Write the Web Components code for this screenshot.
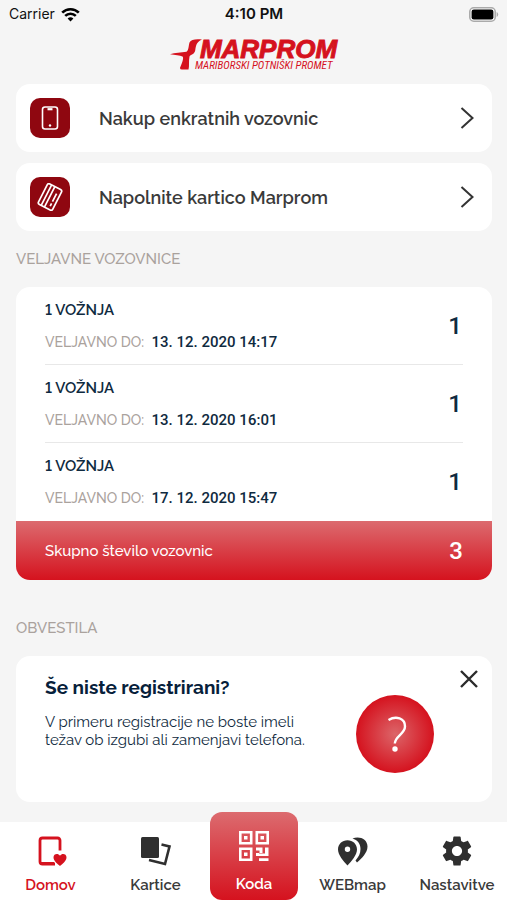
<!DOCTYPE html>
<html lang="sl">
<head>
<meta charset="utf-8">
<meta name="viewport" content="width=device-width, initial-scale=1">
<title>Marprom</title>
<style>
  body {
    margin: 0;
    background-color: #f5f5f5;
    color: #3a3a3a;
    font-family: Raleway, Lato, sans-serif;
    font-variant-numeric: lining-nums;
  }
</style>
</head>
<body>

<template id="status-bar">
  <style>
    :host {
      display: grid;
      grid-template-columns: 1fr auto 1fr;
      align-items: center;
      height: 28px;
      padding: 0 8px 0 9px;
      color: #111;
      font: 400 14px/20px Inter, sans-serif;
    }
    .left {
      display: flex;
      align-items: center;
      gap: 6px;
    }
    .time {
      font-size: 15px;
      font-weight: 600;
    }
    .battery { justify-self: end; }
    svg { display: block; }
  </style>
  <span class="left">
    <slot name="carrier"></slot>
    <svg width="19" height="15" viewBox="0 0 19 15" fill="none" stroke="#000" stroke-width="2.6">
      <path d="M1.2 5.6a11.8 11.8 0 0 1 16.6 0M4.2 8.9a7.6 7.6 0 0 1 10.6 0"/>
      <path d="M9.5 14.6 6.6 11.6a4.2 4.2 0 0 1 5.8 0z" fill="#000" stroke="none"/>
    </svg>
  </span>
  <span class="time"><slot name="time"></slot></span>
  <svg class="battery" width="30" height="15" viewBox="0 0 30 15">
    <rect x=".8" y=".8" width="25.4" height="13.4" rx="4" fill="#fff" stroke="#aaa" stroke-width="1.6"/>
    <rect x="2.6" y="2.6" width="21.8" height="9.8" rx="2.2" fill="#000"/>
    <path d="M27.6 5v5q1.6-.8 1.6-2.5T27.6 5z" fill="#aaa"/>
  </svg>
</template>

<template id="brand-logo">
  <style>
    :host {
      display: flex;
      justify-content: center;
      height: 56px;
      padding-top: 8px;
      box-sizing: border-box;
      color: #d5121e;
    }
    svg { margin-top: 2px; }
    .words {
      display: flex;
      flex-direction: column;
      margin-left: -8px;
    }
    strong, span {
      font-style: italic;
      white-space: nowrap;
    }
    strong {
      padding-left: 5px;
      font-family: "Liberation Sans", sans-serif;
      font-size: 26px;
      line-height: 26px;
      -webkit-text-stroke: 1px #d5121e;
    }
    span {
      font-family: "Roboto Condensed", "Liberation Sans Narrow", sans-serif;
      font-size: 11px;
      line-height: 8px;
    }
  </style>
  <svg width="33" height="32" viewBox="0 0 33 32" fill="#d5121e">
    <path d="M32 1.5C26 1 21 1.2 19.5 4.5C18.5 7.5 19 12 16.500 13.800C11 14.600 5 14.800 0 16.200C5 17.200 10 17.200 12.500 18.500C14.500 20 11 27 10 30Q10 31.500 12 31.500H18.500C19.500 28 18.500 23 19.500 18.500C20.500 16.500 24.500 16.500 25.200 12.500C26 8 26 4 32 1.500Z"/>
  </svg>
  <div class="words"><strong>MARPROM</strong><span>MARIBORSKI POTNIŠKI PROMET</span></div>
</template>

<template id="action-link">
  <style>
    :host { display: block; }
    a {
      display: flex;
      align-items: center;
      height: 68px;
      padding: 0 18px 0 14px;
      border-radius: 14px;
      box-sizing: border-box;
      background-color: #fff;
      color: #3a3a3a;
      font-size: 18px;
      font-weight: 600;
      text-decoration: none;
    }
    .icon {
      display: grid;
      place-items: center;
      width: 40px;
      height: 40px;
      margin-right: 29px;
      border-radius: 10px;
      background-color: #8f0710;
    }
    .label { flex: 1; }
  </style>
  <a href="#">
    <span class="icon"><slot name="icon"></slot></span>
    <span class="label"><slot></slot></span>
    <svg width="14" height="22" viewBox="0 0 14 22" fill="none" stroke="#333" stroke-width="2"><path d="M1.5 1 12.5 11 1.5 21"/></svg>
  </a>
</template>

<template id="section-title">
  <style>
    :host { display: block; }
    h2 {
      margin: 0;
      color: #aaa29d;
      font-size: 15px;
      font-weight: 500;
      line-height: 20px;
    }
  </style>
  <h2><slot></slot></h2>
</template>

<template id="ticket-list">
  <style>
    :host {
      display: block;
      overflow: hidden;
      border-radius: 14px;
      background-color: #fff;
    }
    .rows { padding: 0 29px; }
    .total {
      display: flex;
      align-items: center;
      justify-content: space-between;
      height: 59px;
      padding: 0 29px;
      background: linear-gradient(#dc6b6f, #d5121e);
      color: #fff;
      font-size: 15px;
      font-weight: 500;
    }
    b {
      font: 500 24px Roboto, sans-serif;
    }
  </style>
  <div class="rows"><slot></slot></div>
  <div class="total"><span>Skupno število vozovnic</span><b></b></div>
</template>

<template id="ticket-row">
  <style>
    :host {
      display: flex;
      align-items: center;
      justify-content: space-between;
      height: 78px;
      box-sizing: border-box;
      border-bottom: 1px solid #e8e8e8;
      color: #0f2a40;
      font-size: 15px;
      line-height: 20px;
    }
    :host(:last-of-type) { border-bottom-color: transparent; }
    p { margin: 0; }
    .name {
      margin-bottom: 12px;
      font-weight: 600;
    }
    .valid {
      color: #aaa29d;
      font-size: 14px;
      font-weight: 500;
    }
    time, .count {
      color: #0f2a40;
      font-family: Roboto, sans-serif;
      font-weight: 500;
    }
    time {
      margin-left: 4px;
      font-size: 15px;
    }
    .count {
      padding-right: 1px;
      font-size: 24px;
    }
  </style>
  <div>
    <p class="name"><slot></slot></p>
    <p class="valid">VELJAVNO DO: <time></time></p>
  </div>
  <span class="count"></span>
</template>

<template id="notice-card">
  <style>
    :host {
      display: grid;
      grid-template-columns: 1fr auto;
      position: relative;
      height: 146px;
      padding: 19px 58px 0 29px;
      box-sizing: border-box;
      border-radius: 14px;
      background-color: #fff;
      color: #0f2a40;
    }
    h3 {
      margin: 0 0 14px;
      color: #06203a;
      font-size: 19px;
      font-weight: 700;
      line-height: 24px;
    }
    p {
      max-width: 270px;
      margin: 0;
      font-size: 15px;
      line-height: 18px;
    }
    .mark { margin-top: 20px; }
    button {
      position: absolute;
      top: 13px;
      right: 13px;
      display: grid;
      place-items: center;
      width: 20px;
      height: 20px;
      padding: 0;
      border: none;
      background: none;
    }
  </style>
  <div>
    <h3><slot name="title"></slot></h3>
    <p><slot></slot></p>
  </div>
  <svg class="mark" width="78" height="78" viewBox="0 0 78 78" fill="none">
    <defs>
      <radialGradient id="glow"><stop offset="0" stop-color="#dc6569"/><stop offset="1" stop-color="#d5121e"/></radialGradient>
    </defs>
    <circle cx="39" cy="39" r="39" fill="url(#glow)"/>
    <path d="M32.5 25C40 20.5 49 23 49 31.5C49 39 39 41 38.8 48.5" stroke="#fff" stroke-width="2.4"/>
    <circle cx="39" cy="54" r="2.7" fill="#fff"/>
  </svg>
  <button aria-label="Zapri">
    <svg width="18" height="18" viewBox="0 0 18 18" stroke="#2b2b2b" stroke-width="2.4"><path d="M1 1 17 17M17 1 1 17"/></svg>
  </button>
</template>

<template id="tab-bar">
  <style>
    :host {
      display: block;
      background-color: #fff;
    }
    nav {
      display: grid;
      grid-template-columns: 101px 1fr 88px 1fr 100px;
      height: 78px;
    }
  </style>
  <nav><slot></slot></nav>
</template>

<template id="tab-item">
  <style>
    :host {
      display: block;
      color: #3a3a3a;
    }
    :host([active]) { color: #d5121e; }
    a {
      display: flex;
      flex-direction: column;
      align-items: center;
      gap: 8px;
      padding-top: 13px;
      color: inherit;
      font-size: 15px;
      font-weight: 600;
      line-height: 20px;
      text-decoration: none;
    }
    :host([main]) a {
      height: 88px;
      margin-top: -10px;
      padding-top: 19px;
      gap: 13px;
      box-sizing: border-box;
      border-radius: 12px;
      background: linear-gradient(#dc6b6f, #d5121e);
      color: #fff;
    }
  </style>
  <a href="#"><slot name="icon"></slot><slot></slot></a>
</template>

<template id="home-page">
  <style>
    :host {
      display: flex;
      flex-direction: column;
      min-height: 100vh;
    }
    main { padding: 0 15px 20px 16px; }
    action-link + action-link { margin-top: 11px; }
    section-title { margin: 18px 0; }
    ticket-list + section-title { margin-top: 38px; }
    tab-bar { margin-top: auto; }
    svg { display: block; }
  </style>
  <status-bar><span slot="carrier">Carrier</span><span slot="time">4:10 PM</span></status-bar>
  <brand-logo></brand-logo>
  <main>
    <action-link>
      Nakup enkratnih vozovnic
      <svg slot="icon" width="18" height="24" viewBox="0 0 18 24" fill="none" stroke="#fff" stroke-width="1.6">
        <rect x="1.5" y="1" width="15" height="22" rx="2.5"/>
        <path d="M6.5 3.2h5" stroke-width="2.2"/>
        <circle cx="9" cy="19.5" r="1.2" fill="#fff" stroke="none"/>
      </svg>
    </action-link>
    <action-link>
      Napolnite kartico Marprom
      <svg slot="icon" width="28" height="28" viewBox="0 0 28 28" fill="none" stroke="#fff" stroke-width="1.7">
        <g transform="rotate(27 14 14)">
          <rect x="6" y="2.5" width="16" height="23" rx="2"/>
          <path d="M10 2.5v23M13.6 2.5v23M18.3 8v9M18.3 19v3"/>
        </g>
      </svg>
    </action-link>
    <section-title>VELJAVNE VOZOVNICE</section-title>
    <ticket-list total="3">
      <ticket-row valid="13. 12. 2020 14:17" count="1">1 VOŽNJA</ticket-row>
      <ticket-row valid="13. 12. 2020 16:01" count="1">1 VOŽNJA</ticket-row>
      <ticket-row valid="17. 12. 2020 15:47" count="1">1 VOŽNJA</ticket-row>
    </ticket-list>
    <section-title>OBVESTILA</section-title>
    <notice-card>
      <span slot="title">Še niste registrirani?</span>
      V primeru registracije ne boste imeli težav ob izgubi ali zamenjavi telefona.
    </notice-card>
  </main>
  <tab-bar>
    <tab-item active>
      <svg slot="icon" width="32" height="32" viewBox="0 0 32 32" fill="none" stroke="#d5121e" stroke-width="2.8">
        <path d="M25 15.5V5.5q0-2.500-2.500-2.500H7.500Q5 3 5 5.500v21Q5 29 7.500 29H20"/>
        <path d="M5 27v1q0 2 2.500 2H19v-3H8z" fill="#d5121e" stroke="none"/>
        <path d="M25 31c-2-1.500-6.500-5-6.500-8.700 0-3.800 4.700-4.600 6.500-1.500 1.800-3.100 6.500-2.300 6.500 1.500 0 3.700-4.500 7.200-6.500 8.700z" fill="#d5121e" stroke="none"/>
      </svg>
      Domov
    </tab-item>
    <tab-item>
      <svg slot="icon" width="32" height="32" viewBox="0 0 32 32">
        <rect x="1" y="2" width="18" height="21" rx="1.5" fill="#2f2f2f"/>
        <path d="M21.5 9.5 29.5 11.5 25 29 9 25" fill="none" stroke="#2f2f2f" stroke-width="2.6"/>
      </svg>
      Kartice
    </tab-item>
    <tab-item main>
      <svg slot="icon" width="30" height="30" viewBox="0 0 30 30" fill="none" stroke="#fff" stroke-width="2.6">
        <path d="M1.3 1.3h10.9v10.9H1.3zM17.8 1.3h10.9v10.9H17.8zM1.3 17.8h10.9v10.9H1.3z"/>
        <path d="M5 5h3.500v3.500H5zM21.500 5H25v3.500h-3.500zM5 21.500h3.500V25H5zM17 16.500h6.500v5.500h-3v-2.500H17zM26 16.500h3.500v8.500H20v-2.600h6zM17 22h3v3h-3zM20 27.300h9.500V30H20z" fill="#fff" stroke="none"/>
      </svg>
      Koda
    </tab-item>
    <tab-item>
      <svg slot="icon" width="32" height="32" viewBox="0 0 32 32" fill="#2f2f2f">
        <path fill-rule="evenodd" d="M10.500 30.500C6.500 26 1 20 1 14.500C1 9 5.200 5.200 10.500 5.200C15.800 5.200 20 9 20 14.500C20 20 14.500 26 10.500 30.500ZM10.500 17a2.700 2.700 0 1 0 0-5.400a2.700 2.700 0 0 0 0 5.400z"/>
        <path d="M15.500 3.600C21.500.5 30.500 3.500 30.500 11.500C30.500 18 24.500 23.500 20 27.500L18.500 25.500C21.500 22 23.500 18.500 23.500 14C23.500 9 20.500 5 15.500 3.600Z"/>
      </svg>
      WEBmap
    </tab-item>
    <tab-item>
      <svg slot="icon" width="32" height="32" viewBox="1 1 22 22" fill="#2f2f2f">
        <path d="M19.430 12.980c.04-.32.070-.64.070-.98s-.03-.66-.07-.98l2.110-1.650c.19-.15.240-.42.120-.64l-2-3.460c-.12-.22-.39-.3-.61-.22l-2.490 1c-.52-.4-1.080-.73-1.690-.98l-.38-2.650C14.460 2.180 14.250 2 14 2h-4c-.25 0-.46.180-.49.420l-.38 2.650c-.61.250-1.170.590-1.690.980l-2.490-1c-.23-.09-.49 0-.61.220l-2 3.460c-.13.220-.07.490.120.640l2.110 1.650c-.04.320-.07.650-.07.980s.03.660.070.980l-2.110 1.650c-.19.150-.24.420-.12.640l2 3.460c.12.220.39.300.61.220l2.490-1c.52.400 1.080.730 1.690.980l.38 2.650c.03.240.24.420.49.420h4c.25 0 .46-.18.490-.42l.38-2.650c.61-.25 1.170-.59 1.690-.98l2.490 1c.23.090.49 0 .61-.22l2-3.460c.12-.22.070-.49-.12-.64l-2.110-1.650zM12 15.500c-1.930 0-3.500-1.570-3.500-3.500s1.570-3.500 3.500-3.500 3.500 1.570 3.500 3.500-1.570 3.500-3.500 3.500z"/>
      </svg>
      Nastavitve
    </tab-item>
  </tab-bar>
</template>

<home-page></home-page>

<script>
  class TemplateElement extends HTMLElement {
    constructor () {
      super()
      let template = document.querySelector(`template#${this.localName}`)
      this.attachShadow({ mode: 'open' }).appendChild(template.content.cloneNode(true))
    }
  }

  customElements.define('status-bar', class extends TemplateElement {})
  customElements.define('brand-logo', class extends TemplateElement {})
  customElements.define('action-link', class extends TemplateElement {})
  customElements.define('section-title', class extends TemplateElement {})
  customElements.define('ticket-row', class extends TemplateElement {
    connectedCallback () {
      this.shadowRoot.querySelector('time').textContent = this.getAttribute('valid')
      this.shadowRoot.querySelector('.count').textContent = this.getAttribute('count')
    }
  })
  customElements.define('ticket-list', class extends TemplateElement {
    connectedCallback () {
      this.shadowRoot.querySelector('b').textContent = this.getAttribute('total')
    }
  })
  customElements.define('notice-card', class extends TemplateElement {
    connectedCallback () {
      this.shadowRoot.querySelector('button').onclick = () => this.remove()
    }
  })
  customElements.define('tab-bar', class extends TemplateElement {})
  customElements.define('tab-item', class extends TemplateElement {})
  customElements.define('home-page', class extends TemplateElement {})
</script>
</body>
</html>
